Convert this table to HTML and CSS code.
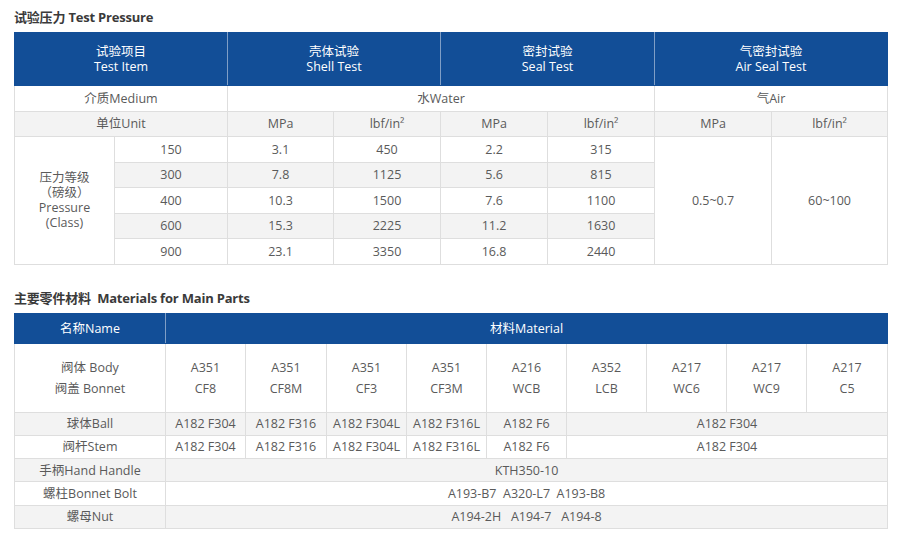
FILE: index.html
```html
<!DOCTYPE html>
<html lang="zh">
<head>
<meta charset="utf-8">
<title>Test Pressure</title>
<link rel="stylesheet" href="styles.css">
</head>
<body>
<div class="page">
  <h2 class="title">试验压力 Test Pressure</h2>
  <table class="grid t1">
    <colgroup>
      <col style="width:100px"><col style="width:113px"><col style="width:106px"><col style="width:107px">
      <col style="width:107px"><col style="width:107px"><col style="width:117px"><col style="width:116px">
    </colgroup>
    <thead>
      <tr class="head">
        <th colspan="2"><span class="ln">试验项目</span><span class="ln">Test Item</span></th>
        <th colspan="2"><span class="ln">壳体试验</span><span class="ln">Shell Test</span></th>
        <th colspan="2"><span class="ln">密封试验</span><span class="ln">Seal Test</span></th>
        <th colspan="2"><span class="ln">气密封试验</span><span class="ln">Air Seal Test</span></th>
      </tr>
    </thead>
    <tbody>
      <tr class="row">
        <td colspan="2">介质Medium</td>
        <td colspan="4">水Water</td>
        <td colspan="2">气Air</td>
      </tr>
      <tr class="row alt">
        <td colspan="2">单位Unit</td>
        <td>MPa</td><td>lbf/in²</td><td>MPa</td><td>lbf/in²</td><td>MPa</td><td>lbf/in²</td>
      </tr>
      <tr class="row">
        <td rowspan="5" class="white multi"><span class="ln">压力等级</span><span class="ln">（磅级）</span><span class="ln">Pressure</span><span class="ln">(Class)</span></td>
        <td>150</td><td>3.1</td><td>450</td><td>2.2</td><td>315</td>
        <td rowspan="5" class="white">0.5~0.7</td>
        <td rowspan="5" class="white">60~100</td>
      </tr>
      <tr class="row alt"><td>300</td><td>7.8</td><td>1125</td><td>5.6</td><td>815</td></tr>
      <tr class="row"><td>400</td><td>10.3</td><td>1500</td><td>7.6</td><td>1100</td></tr>
      <tr class="row alt"><td>600</td><td>15.3</td><td>2225</td><td>11.2</td><td>1630</td></tr>
      <tr class="row"><td>900</td><td>23.1</td><td>3350</td><td>16.8</td><td>2440</td></tr>
    </tbody>
  </table>

  <h2 class="title second">主要零件材料&nbsp; Materials for Main Parts</h2>
  <table class="grid t2">
    <colgroup>
      <col style="width:151px">
      <col style="width:80px"><col style="width:81px"><col style="width:80px"><col style="width:80px">
      <col style="width:80px"><col style="width:80px"><col style="width:80px"><col style="width:80px"><col style="width:81px">
    </colgroup>
    <thead>
      <tr class="head h2">
        <th>名称Name</th>
        <th colspan="9">材料Material</th>
      </tr>
    </thead>
    <tbody>
      <tr class="row body">
        <td><span class="ln">阀体 Body</span><span class="ln">阀盖 Bonnet</span></td>
        <td><span class="ln">A351</span><span class="ln">CF8</span></td>
        <td><span class="ln">A351</span><span class="ln">CF8M</span></td>
        <td><span class="ln">A351</span><span class="ln">CF3</span></td>
        <td><span class="ln">A351</span><span class="ln">CF3M</span></td>
        <td><span class="ln">A216</span><span class="ln">WCB</span></td>
        <td><span class="ln">A352</span><span class="ln">LCB</span></td>
        <td><span class="ln">A217</span><span class="ln">WC6</span></td>
        <td><span class="ln">A217</span><span class="ln">WC9</span></td>
        <td><span class="ln">A217</span><span class="ln">C5</span></td>
      </tr>
      <tr class="row alt sm">
        <td>球体Ball</td>
        <td>A182 F304</td><td>A182 F316</td><td>A182 F304L</td><td>A182 F316L</td><td>A182 F6</td>
        <td colspan="4">A182 F304</td>
      </tr>
      <tr class="row sm">
        <td>阀杆Stem</td>
        <td>A182 F304</td><td>A182 F316</td><td>A182 F304L</td><td>A182 F316L</td><td>A182 F6</td>
        <td colspan="4">A182 F304</td>
      </tr>
      <tr class="row alt sm">
        <td>手柄Hand Handle</td>
        <td colspan="9">KTH350-10</td>
      </tr>
      <tr class="row sm">
        <td>螺柱Bonnet Bolt</td>
        <td colspan="9" class="pre">A193-B7  A320-L7  A193-B8</td>
      </tr>
      <tr class="row alt sm">
        <td>螺母Nut</td>
        <td colspan="9" class="pre">A194-2H   A194-7   A194-8</td>
      </tr>
    </tbody>
  </table>
</div>
</body>
</html>
```

FILE: styles.css
```css
html, body {
  margin: 0;
  padding: 0;
  background: #ffffff;
}

.page {
  padding: 8px 13px 0 14px;
  font-family: "Open Sans", "Noto Sans CJK SC", sans-serif;
  color: #5a5a5a;
}

.title {
  margin: 0 0 6px 0;
  font-size: 13px;
  line-height: 18px;
  font-weight: 700;
  color: #3a3a3a;
  letter-spacing: -0.2px;
}

.title.second {
  margin-top: 24px;
}

.grid {
  width: 873px;
  border-collapse: collapse;
  table-layout: fixed;
  font-size: 12.5px;
}

.grid th,
.grid td {
  padding: 0;
  text-align: center;
  vertical-align: middle;
  border: 1px solid #dedede;
  line-height: 15px;
}

.ln {
  display: block;
  height: 15px;
  line-height: 15px;
  overflow: visible;
}

.head th {
  background: #124e97;
  color: #ffffff;
  font-weight: 400;
  height: 52px;
  border-color: #124e97;
  border-right-color: #7f9ec6;
}

.head th:last-child {
  border-right-color: #124e97;
}

.head.h2 th {
  height: 29px;
}

.row td {
  height: 24.5px;
  background: #ffffff;
}

.row.alt td {
  background: #f3f3f3;
}

.row td.white {
  background: #ffffff;
}

.t2 .row.body td {
  height: 68px;
}

.t2 .row.body .ln {
  height: 21px;
  line-height: 21px;
}

.t2 .row.sm td {
  height: 22.3px;
}

.pre {
  white-space: pre;
}
```
